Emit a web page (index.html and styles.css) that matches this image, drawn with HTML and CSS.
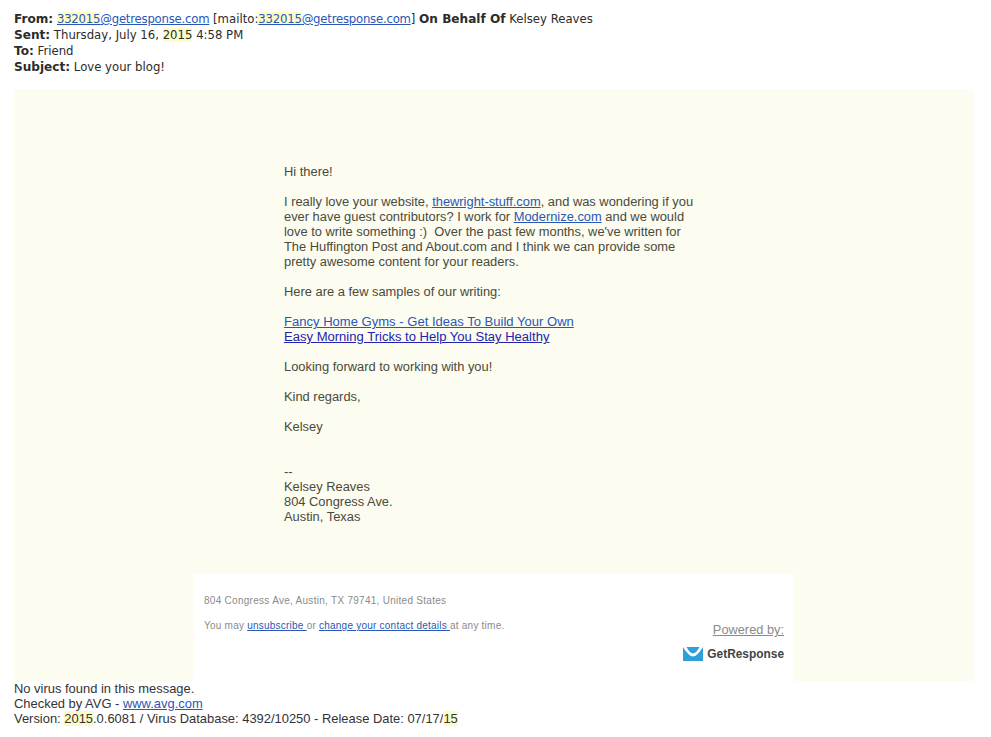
FILE: index.html
```html
<!DOCTYPE html>
<html lang="en">
<head>
<meta charset="utf-8">
<title>Love your blog!</title>
<link rel="stylesheet" href="styles.css">
</head>
<body>
<header class="headers">
  <div><b>From:</b> <a href="#"><mark>332015</mark>@getresponse.com</a> [mailto:<a href="#"><mark>332015</mark>@getresponse.com</a>] <b>On Behalf Of</b> Kelsey Reaves</div>
  <div><b>Sent:</b> Thursday, July 16, <mark>2015</mark> 4:58 PM</div>
  <div><b>To:</b> Friend</div>
  <div><b>Subject:</b> Love your blog!</div>
</header>
<main class="panel">
  <article class="message">
    <p>Hi there!</p>
    <p>I really love your website, <a href="#">thewright-stuff.com</a>, and was wondering if you ever have guest contributors? I work for <a href="#">Modernize.com</a> and we would love to write something :)&nbsp; Over the past few months, we've written for The Huffington Post and About.com and I think we can provide some pretty awesome content for your readers.</p>
    <p>Here are a few samples of our writing:</p>
    <p><a href="#" class="sample">Fancy Home Gyms - Get Ideas To Build Your Own</a><br><a href="#" class="sample dark">Easy Morning Tricks to Help You Stay Healthy</a></p>
    <p>Looking forward to working with you!</p>
    <p>Kind regards,</p>
    <p>Kelsey</p>
    <p class="signature">--<br>Kelsey Reaves<br>804 Congress Ave.<br>Austin, Texas</p>
  </article>
  <footer class="mailer">
    <div class="legal">
      <p class="address">804 Congress Ave, Austin, TX 79741, United States</p>
      <p class="notice">You may <a href="#">unsubscribe </a> or <a href="#">change your contact details </a> at any time.</p>
    </div>
    <div class="brand">
      <a href="#" class="powered">Powered by:</a>
      <div class="logo">
        <svg width="20" height="14" viewBox="0 0 20 14" aria-hidden="true"><rect width="20" height="14" fill="#2f9fd8"/><path d="M0 0C4 6.500 7.500 9.500 10 9.500S16 6.500 20 0z" fill="#fff"/><path d="M3.500 0C6 4.500 8 6.500 10 6.500S14 4.500 16.500 0z" fill="#2f9fd8"/></svg>
        <span>GetResponse</span>
      </div>
    </div>
  </footer>
</main>
<section class="virus">
  <div>No virus found in this message.</div>
  <div>Checked by AVG - <a href="#">www.avg.com</a></div>
  <div>Version: <mark>2015</mark>.0.6081 / Virus Database: 4392/10250 - Release Date: 07/17/<mark>15</mark></div>
</section>
</body>
</html>
```
FILE: styles.css
```css
html, body { margin: 0; padding: 0; background: #fff; }
body { width: 960px; padding: 11px 0 0 14px; color: #333; }
a { color: #2a57b5; text-decoration: underline; }
mark { background: #fdfcc8; color: inherit; }

.headers { font: 11.700px/16px "DejaVu Sans", Tahoma, sans-serif; color: #2c2c2c; height: 78px; }
.headers b { font-weight: 700; font-size: 12.100px; line-height: 0; }
.headers a { letter-spacing: -0.220px; }

.panel { background: #fcfcf0; height: 592px; display: flex; flex-direction: column; align-items: center; }

.message { width: 600px; height: 485px; box-sizing: border-box; padding: 75px 90px 0; font: 12.880px/15px "Liberation Sans", Arial, sans-serif; color: #4a4a3c; }
.message p { margin: 0 0 15px; width: 415px; }
.message .signature { margin-top: 30px; }
.message .sample { font-size: 13.050px; }
.message .dark { color: #2222b0; }

.mailer { width: 600px; height: 107px; box-sizing: border-box; background: #fff; padding: 0 10px; display: flex; justify-content: space-between; font: 10px/12px "Liberation Sans", Arial, sans-serif; color: #8a8a8a; letter-spacing: 0.280px; }
.legal { padding-top: 21px; }
.legal p { margin: 0 0 13px; }
.legal .notice { letter-spacing: 0.230px; }
.brand { padding-top: 48px; display: flex; flex-direction: column; align-items: flex-end; letter-spacing: 0; }
.powered { font-size: 12.800px; line-height: 15px; color: #8a8a8a; }
.logo { display: flex; align-items: center; gap: 4px; margin-top: 10px; font: 700 11.900px/14px "Liberation Sans", Arial, sans-serif; color: #3f4548; }
.logo svg { display: block; }

.virus { font: 12.930px/15px "Liberation Sans", Arial, sans-serif; color: #333; }
```
